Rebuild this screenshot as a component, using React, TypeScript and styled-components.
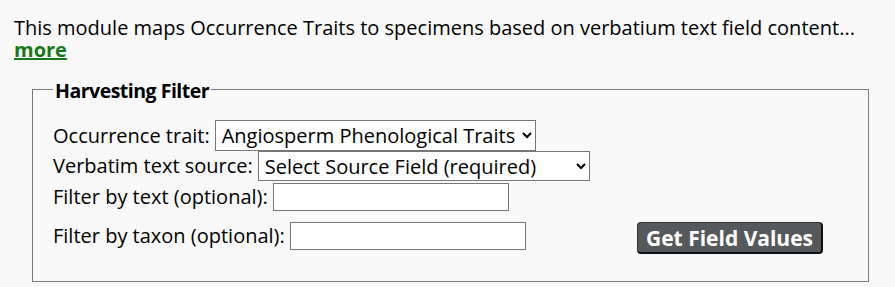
import styled, { createGlobalStyle } from "styled-components";

const GlobalStyle = createGlobalStyle`
  body {
    margin: 0;
    background-color: #f9f9f9;
    font-family: "Open Sans", "Liberation Sans", sans-serif;
    color: #000;
  }
`;

const Page = styled.div`
  padding: 17px 14px 0 14px;
  width: 895px;
  box-sizing: border-box;
`;

const Intro = styled.div`
  font-size: 20px;
  line-height: 22px;
`;

const MoreLink = styled.a`
  color: #187818;
  font-weight: bold;
  text-decoration: underline;
  cursor: pointer;
`;

const FilterSet = styled.fieldset`
  margin: 13px 12px 0 18px;
  padding: 16px 20px 27px 20px;
  border: 1px solid #7a7a7a;
`;

const Legend = styled.legend`
  font-size: 19.5px;
  font-weight: bold;
  letter-spacing: -0.5px;
  padding: 3px 2px 0 2px;
`;

const Row = styled.div<{ $gap?: number; $align?: string }>`
  display: flex;
  align-items: ${(p) => p.$align ?? "center"};
  font-size: 20px;
  margin-top: ${(p) => p.$gap ?? 0}px;
`;

const Label = styled.label`
  margin-right: 5px;
  white-space: nowrap;
  line-height: 28px;
`;

const Select = styled.select<{ $width: number; $height: number }>`
  width: ${(p) => p.$width}px;
  height: ${(p) => p.$height}px;
  box-sizing: border-box;
  font-family: "Open Sans", "Liberation Sans", sans-serif;
  font-size: 20px;
  color: #000;
  background: #fff;
  border: 1px solid #767676;
  border-radius: 0;
  padding: 0 2px;
  margin: 0;
`;

const TextInput = styled.input`
  width: 236px;
  height: 28px;
  box-sizing: border-box;
  font-family: "Open Sans", "Liberation Sans", sans-serif;
  font-size: 18px;
  border: 1px solid #767676;
  border-radius: 0;
  background: #fff;
  margin: 0;
`;

const Button = styled.button`
  margin-left: auto;
  margin-right: 25px;
  width: 186px;
  height: 32px;
  box-sizing: border-box;
  background: #56595c;
  color: #fff;
  font-family: "Open Sans", "Liberation Sans", sans-serif;
  font-size: 21px;
  font-weight: bold;
  line-height: 28px;
  border: 1px solid #333;
  border-bottom: 2px solid #111;
  border-right: 2px solid #111;
  border-radius: 4px;
  padding: 0;
  cursor: pointer;
`;

export default function App() {
  return (
    <>
      <GlobalStyle />
      <Page>
        <Intro>
          This module maps Occurrence Traits to specimens based on verbatium text field content...
          <br />
          <MoreLink>more</MoreLink>
        </Intro>
        <FilterSet>
          <Legend>Harvesting Filter</Legend>
          <Row>
            <Label>Occurrence trait:</Label>
            <Select $width={321} $height={31} defaultValue="1">
              <option value="1">Angiosperm Phenological Traits</option>
            </Select>
          </Row>
          <Row>
            <Label>Verbatim text source:</Label>
            <Select $width={332} $height={30} defaultValue="">
              <option value="">Select Source Field (required)</option>
            </Select>
          </Row>
          <Row $gap={2}>
            <Label>Filter by text (optional):</Label>
            <TextInput type="text" />
          </Row>
          <Row $gap={11} $align="flex-start">
            <Label>Filter by taxon (optional):</Label>
            <TextInput type="text" />
            <Button>Get Field Values</Button>
          </Row>
        </FilterSet>
      </Page>
    </>
  );
}
